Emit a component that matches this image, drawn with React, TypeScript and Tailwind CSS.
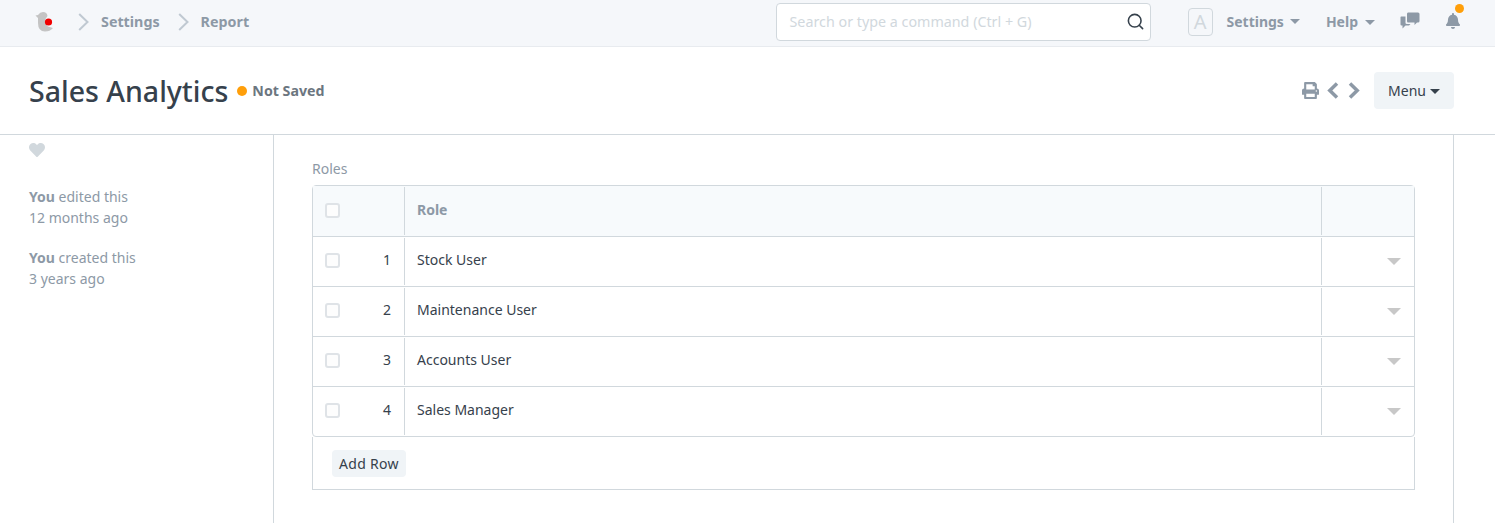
import { FaBell, FaHeart, FaPrint } from 'react-icons/fa'
import { LuSearch } from 'react-icons/lu'

const roles = ['Stock User', 'Maintenance User', 'Accounts User', 'Sales Manager']

const Crumb = ({ label }: { label: string }) => (
    <div className="flex items-center">
        <svg width="12" height="18" viewBox="0 0 12 18" className="text-[#c0c9d2]">
            <path d="M1.2 1 L9.5 9 L1.2 17" fill="none" stroke="currentColor" strokeWidth="2" />
        </svg>
        <span className="ml-[11px] text-[14.3px] font-bold text-[#8d99a6]">{label}</span>
    </div>
)

const Caret = ({ className }: { className: string }) => (
    <span className={`inline-block w-0 h-0 border-x-[5px] border-x-transparent border-t-[5px] ${className}`} />
)

const Check = () => <span className="block mb-[2px] w-[15px] h-[15px] rounded-[3px] border-2 border-[#dfe3e7] bg-[#fdfdfd]" />

const Navbar = () => (
    <div className="h-[47px] bg-[#f5f7fa] border-b border-[#e8ebef] flex items-center pl-[35px] pr-[34px] pb-[3px]">
        <svg width="19" height="21" viewBox="0 0 19 21">
            <path d="M0.5 4.5 L3 4 Q5 1 8 1 Q12 1 12.500 5 L10.500 8 Q9.500 13 13 15.500 L18 17 Q15 20.500 10 20.500 Q3 20.500 3 12 V7 Z" fill="#c4c4c4" />
            <circle cx="13.500" cy="11" r="3.600" fill="#f00000" />
        </svg>
        <div className="ml-[24px] flex items-center gap-[18px]">
            <Crumb label="Settings" />
            <Crumb label="Report" />
        </div>
        <div className="ml-auto w-[375px] h-[38px] bg-white border border-[#d1d8dd] rounded-[4px] flex items-center justify-between pl-[13px] pr-[5px]">
            <span className="text-[14.3px] text-[#d1d8dd]">Search or type a command (Ctrl + G)</span>
            <LuSearch size={19} className="text-[#36414c]" />
        </div>
        <span className="ml-[37px] w-[25px] h-[28px] flex items-center justify-center rounded-[4px] border border-[#d1d8dd] text-[20px] text-[#d1d8dd]">A</span>
        <span className="ml-[14px] text-[14px] font-bold text-[#8d99a6]">Settings</span>
        <Caret className="ml-[6px] border-t-[#8d99a6]" />
        <span className="ml-[26px] text-[14px] font-bold text-[#8d99a6]">Help</span>
        <Caret className="ml-[7px] mt-[2px] border-t-[#8d99a6]" />
        <svg width="20" height="17" viewBox="0 0 20 17" className="ml-[25px] mb-[2px]">
            <path d="M8 0.500 H18 Q19.500 0.500 19.500 2 V9 Q19.500 10.500 18 10.500 H17 L14.500 13 V10.500 H8 Q7 10.500 7 9 V2 Q7 0.500 8 0.500 Z" fill="#8d99a6" />
            <path d="M1 4.500 H5.500 V11 Q5.500 12 7 12 H10.500 L9 13.500 H5.500 L2.500 16.500 V13.500 H1.500 Q0.500 13.500 0.500 12.500 V5 Z" fill="#8d99a6" />
        </svg>
        <div className="relative ml-[25px] mb-[2px]">
            <FaBell size={16} className="text-[#8d99a6]" />
            <span className="absolute -top-[9px] left-[10px] w-[9px] h-[9px] rounded-full bg-[#ff9f0a]" />
        </div>
    </div>
)

const PageHead = () => (
    <div className="h-[88px] border-b border-[#d1d8dd] flex items-center pl-[29px] pr-[41px]">
        <h1 className="text-[28.5px] leading-[36px] font-medium text-[#36414c]">Sales Analytics</h1>
        <span className="ml-[9px] w-[10px] h-[10px] rounded-full bg-[#ff9f0a]" />
        <span className="ml-[5px] text-[14.2px] font-bold text-[#6c7680]">Not Saved</span>
        <div className="ml-auto flex items-center text-[#8d99a6]">
            <FaPrint size={17} />
            <svg width="12" height="17" viewBox="0 0 12 17" className="ml-[8px]">
                <path d="M10 1.500 L2.800 8.500 L10 15.500" fill="none" stroke="currentColor" strokeWidth="3.500" />
            </svg>
            <svg width="12" height="17" viewBox="0 0 12 17" className="ml-[9px]">
                <path d="M2 1.500 L9.200 8.500 L2 15.500" fill="none" stroke="currentColor" strokeWidth="3.500" />
            </svg>
            <div className="ml-[14px] w-[80px] h-[37px] rounded-[4px] bg-[#f0f4f7] flex items-center justify-center text-[14px] text-[#36414c]">
                Menu
                <Caret className="ml-[4px] mt-[2px] border-t-[#36414c]" />
            </div>
        </div>
    </div>
)

const Sidebar = () => (
    <div className="w-[274px] shrink-0 border-r border-[#d1d8dd] pl-[29px] pt-[7px] text-[14px] leading-[21px] text-[#8d99a6]">
        <FaHeart size={16} className="text-[#d1d8dd]" />
        <div className="mt-[28px]">
            <div><b className="font-bold">You</b> edited this</div>
            <div>12 months ago</div>
        </div>
        <div className="mt-[19px]">
            <div><b className="font-bold">You</b> created this</div>
            <div>3 years ago</div>
        </div>
    </div>
)

const RoleRow = ({ index, name }: { index: number; name: string }) => (
    <div className="flex h-[50px] border-t border-[#d1d8dd] text-[14px] text-[#36414c]">
        <div className="w-[92px] my-[1px] flex items-center justify-between pl-[12px] pr-[13px] border-r border-[#d1d8dd]">
            <Check />
            <span className="mb-[5px]">{index}</span>
        </div>
        <div className="flex-1 my-[1px] flex items-center pl-[12px] pb-[5px] border-r border-[#d1d8dd]">{name}</div>
        <div className="w-[92px] flex items-center justify-end pr-[13px]">
            <span className="block w-0 h-0 border-x-[7px] border-x-transparent border-t-[7px] border-t-[#c8c8c8]" />
        </div>
    </div>
)

const RolesTable = () => (
    <div className="w-[1103px]">
        <div className="text-[14px] leading-[21px] text-[#8d99a6]">Roles</div>
        <div className="mt-[6px] border border-[#d1d8dd] rounded-[4px]">
            <div className="flex h-[50px] bg-[#f7fafc] text-[14px] font-bold text-[#8d99a6]">
                <div className="w-[92px] my-[1px] flex items-center pl-[12px] border-r border-[#d1d8dd]">
                    <Check />
                </div>
                <div className="flex-1 my-[1px] flex items-center pl-[12px] pb-[3px] border-r border-[#d1d8dd]">Role</div>
                <div className="w-[92px]" />
            </div>
            {roles.map((name, i) => (
                <RoleRow key={name} index={i + 1} name={name} />
            ))}
        </div>
        <div className="h-[53px] border-x border-b border-[#d1d8dd] flex items-center pl-[19px]">
            <button className="w-[74px] h-[27px] rounded-[4px] bg-[#f0f4f7] text-[14px] tracking-[0.3px] text-[#36414c]">Add Row</button>
        </div>
    </div>
)

export default function App() {
    return (
        <div className="w-[1495px] h-[523px] overflow-hidden bg-white font-['Noto_Sans',sans-serif]">
            <Navbar />
            <PageHead />
            <div className="flex h-[388px]">
                <Sidebar />
                <div className="w-[1180px] border-r border-[#d1d8dd] pl-[38px] pt-[23px]">
                    <RolesTable />
                </div>
            </div>
        </div>
    )
}
